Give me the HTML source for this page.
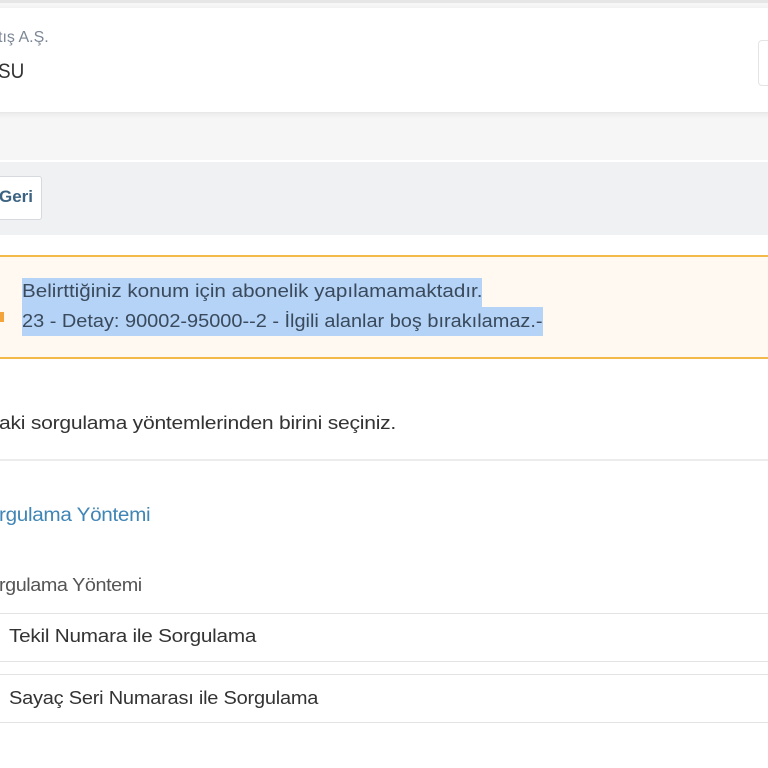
<!DOCTYPE html>
<html><head><meta charset="utf-8"><style>
*{margin:0;padding:0;box-sizing:border-box}
body{width:768px;height:768px;overflow:hidden;background:#fff;font-family:"Liberation Sans",sans-serif;position:relative}
.a{position:absolute;white-space:nowrap;transform-origin:0 50%}
</style></head><body>
<div class="a" style="left:0;top:0;width:768px;height:160px;background:#f6f6f6"></div>
<div class="a" style="left:0;top:0;width:768px;height:3px;background:#e6e6e6"></div>
<div class="a" style="left:-10px;top:8px;width:790px;height:104px;background:#fff;box-shadow:0 2px 6px rgba(0,0,0,.08)"></div>
<div class="a" style="left:758px;top:40px;width:20px;height:46px;border:1px solid #e4e4e4;border-radius:4px;background:#fff"></div>
<div class="a" style="left:-2px;top:29px;font-size:16px;color:#7c8796">tış A.Ş.</div>
<div class="a" style="left:-2px;top:60px;font-size:21px;color:#333;transform:scaleX(0.9)">SU</div>
<div class="a" style="left:0;top:162px;width:768px;height:73px;background:#f0f1f3"></div>
<div class="a" style="left:-6px;top:176px;width:48px;height:44px;background:#fff;border:1px solid #d6d9dd;border-radius:3px"></div>
<div class="a" style="left:-1px;top:187px;font-size:17px;font-weight:bold;color:#3c6381">Geri</div>
<div class="a" style="left:0;top:255px;width:768px;height:104px;background:#fff9f1;border-top:2px solid #f3b949;border-bottom:2px solid #f3b949"></div>
<div class="a" style="left:22px;top:278px;height:29px;width:460px;background:#b4d3f6"></div>
<div class="a" style="left:22px;top:307px;height:29px;width:521px;background:#b4d3f6"></div>
<div class="a" style="left:22px;top:281px;font-size:18px;color:#3a4a5c;transform:scaleX(1.145)">Belirttiğiniz konum için abonelik yapılamamaktadır.</div>
<div class="a" style="left:22px;top:311px;font-size:18px;color:#3a4a5c;transform:scaleX(1.107)">23 - Detay: 90002-95000--2 - İlgili alanlar boş bırakılamaz.-</div>
<div class="a" style="left:0;top:312px;width:4px;height:10px;background:#f3a53b"></div>
<div class="a" style="left:-1px;top:413px;font-size:18px;color:#333;letter-spacing:-0.2px;transform:scaleX(1.17)">aki sorgulama yöntemlerinden birini seçiniz.</div>
<div class="a" style="left:0;top:459px;width:768px;height:2px;background:#ececec"></div>
<div class="a" style="left:-1px;top:505px;font-size:19px;color:#3f85b5;letter-spacing:-0.3px;transform:scaleX(1.09)">rgulama Yöntemi</div>
<div class="a" style="left:-1px;top:575px;font-size:18px;color:#555;letter-spacing:-0.4px;transform:scaleX(1.1)">rgulama Yöntemi</div>
<div class="a" style="left:0;top:613px;width:768px;height:1px;background:#e4e4e4"></div>
<div class="a" style="left:9px;top:626px;font-size:18px;color:#333;letter-spacing:-0.2px;transform:scaleX(1.15)">Tekil Numara ile Sorgulama</div>
<div class="a" style="left:0;top:661px;width:768px;height:1px;background:#e4e4e4"></div>
<div class="a" style="left:0;top:674px;width:768px;height:1px;background:#e4e4e4"></div>
<div class="a" style="left:9px;top:688px;font-size:18px;color:#333;letter-spacing:-0.2px;transform:scaleX(1.11)">Sayaç Seri Numarası ile Sorgulama</div>
<div class="a" style="left:0;top:722px;width:768px;height:1px;background:#e4e4e4"></div>
</body></html>
